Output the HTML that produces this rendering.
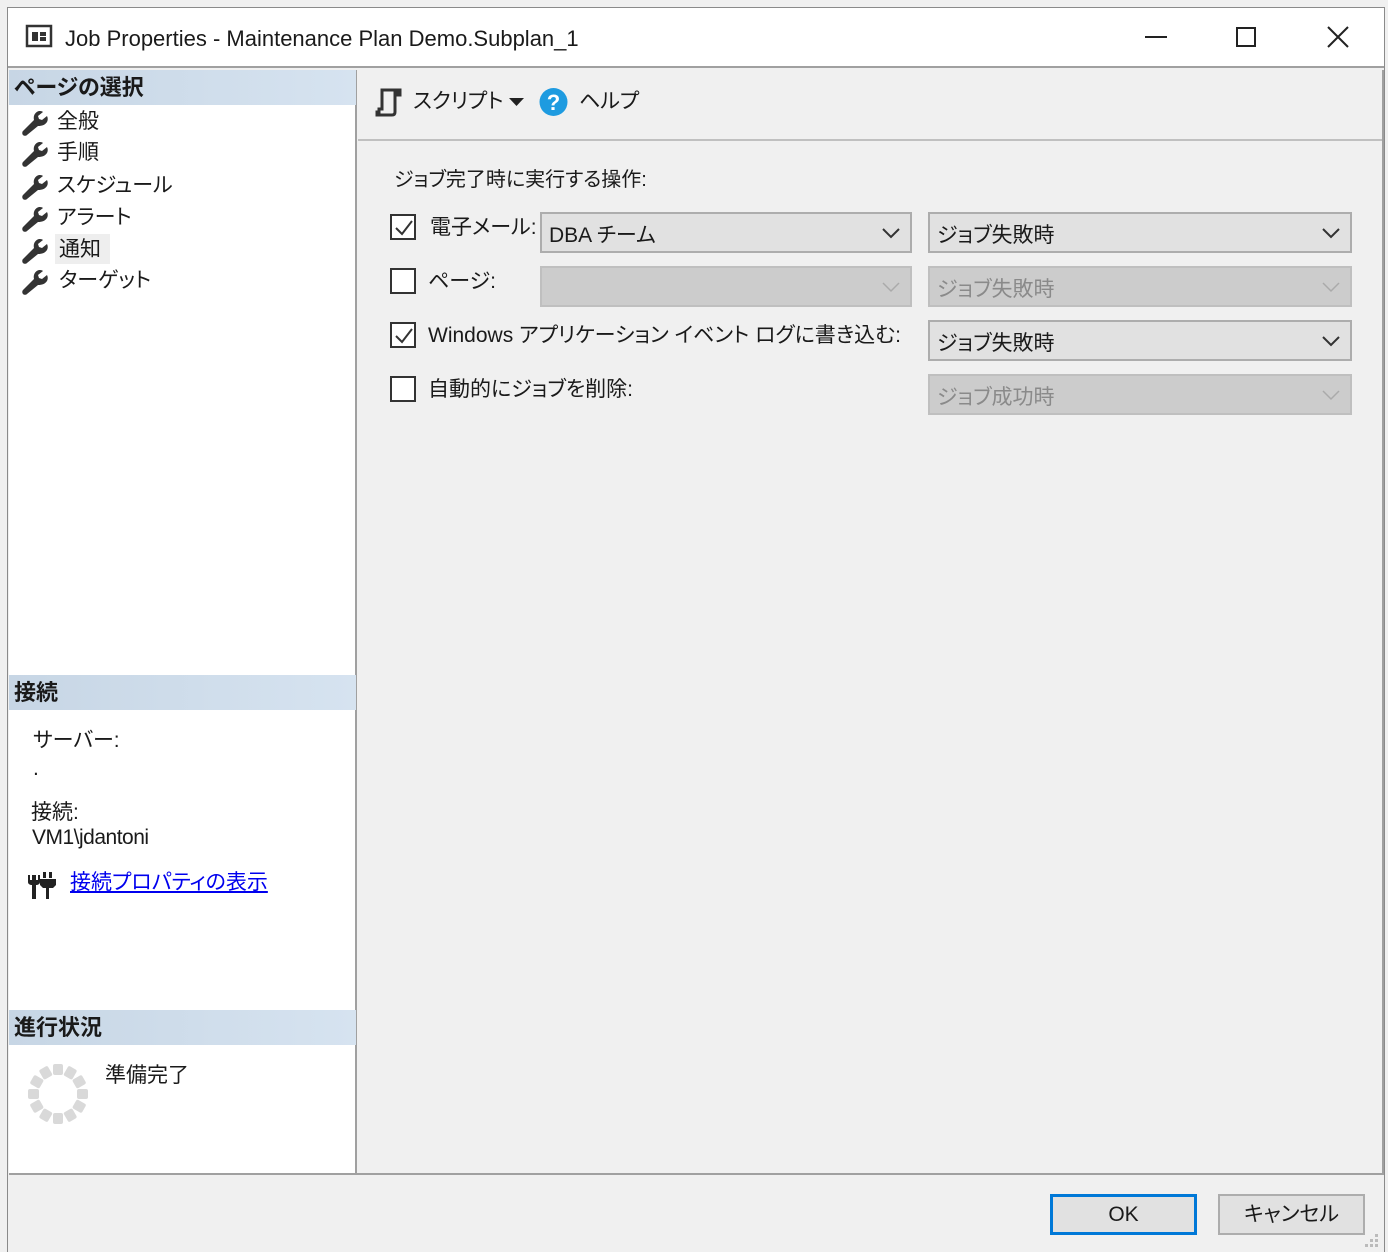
<!DOCTYPE html>
<html><head><meta charset="utf-8"><style>
*{margin:0;padding:0;box-sizing:border-box}
body{width:1388px;height:1252px;background:#f0f0f0;position:relative;overflow:hidden;font-family:"Segoe UI","Liberation Sans","Noto Sans CJK JP",sans-serif;color:#1a1a1a;font-feature-settings:"palt"}
.a{position:absolute}
.t{font-size:21px;white-space:nowrap;line-height:1}
.hdr{position:absolute;left:9px;width:347px;height:35px;background:linear-gradient(90deg,#c7d6e5,#d6e3f0);font-weight:bold;font-size:22px;padding:5px 5px;line-height:25px}
.cb{position:absolute;width:26px;height:26px;border:2px solid #333;background:#fff}
.dd{position:absolute;height:41px;border:2px solid #adadad;background:#e1e1e1;font-size:21px;padding:5px 0 0 7px;white-space:nowrap}
.dd.dis{background:#cccccc;border-color:#bfbfbf;color:#8a8a8a}
.chev{position:absolute;right:10px;top:13px}
.btn{position:absolute;top:1194px;height:41px;width:147px;background:#e1e1e1;border:2px solid #adadad;font-size:21px;text-align:center;line-height:37px}
</style></head><body>
<div class="a" style="left:7px;top:7px;width:1378px;height:1245px;border:1px solid #8a8a8a;border-bottom:none;background:#f0f0f0"></div>
<div class="a" style="left:8px;top:8px;width:1376px;height:60px;background:#fff;border-bottom:2px solid #a0a0a0"></div>
<svg class="a" style="left:25px;top:24px" width="30" height="26"><rect x="2" y="2" width="24" height="20" fill="none" stroke="#333" stroke-width="2.5"/><rect x="7" y="8" width="6" height="9" fill="#333"/><rect x="15" y="8" width="6" height="4" fill="#333"/><rect x="15" y="13" width="6" height="4" fill="#333"/></svg>
<div class="a t" style="left:65px;top:28px;font-size:22px">Job Properties - Maintenance Plan Demo.Subplan_1</div>
<div class="a" style="left:1145px;top:36px;width:22px;height:2px;background:#222"></div>
<div class="a" style="left:1236px;top:27px;width:20px;height:20px;border:2px solid #222"></div>
<svg class="a" style="left:1326px;top:25px" width="24" height="24"><path d="M2 2L22 22M22 2L2 22" stroke="#222" stroke-width="2"/></svg>

<div class="a" style="left:9px;top:70px;width:348px;height:1105px;background:#fff;border-right:2px solid #a0a0a0"></div>
<div class="hdr" style="top:70px">ページの選択</div>
<div class="a" style="left:55px;top:234px;width:55px;height:30px;background:#eeeeee"></div>
<svg class="a" style="left:20px;top:108px" width="30" height="190">
<defs><path id="w" d="M3 23l11-11c-1-4 1-8 5-9 1 0 3 0 4 1l-5 4 1 3 3 1 5-4c1 2 1 4 0 6-2 3-5 4-9 4L7 27c-1 1-3 1-4 0s-1-3 0-4z" fill="#333"/></defs>
<use href="#w" y="0"/><use href="#w" y="31"/><use href="#w" y="64"/><use href="#w" y="96"/><use href="#w" y="128"/><use href="#w" y="159"/>
</svg>
<div class="a t" style="left:57px;top:111px">全般</div>
<div class="a t" style="left:57px;top:142px">手順</div>
<div class="a t" style="left:57px;top:175px">スケジュール</div>
<div class="a t" style="left:57px;top:207px">アラート</div>
<div class="a t" style="left:59px;top:239px">通知</div>
<div class="a t" style="left:59px;top:270px">ターゲット</div>

<div class="hdr" style="top:675px">接続</div>
<div class="a t" style="left:33px;top:730px">サーバー:</div>
<div class="a t" style="left:33px;top:758px">.</div>
<div class="a t" style="left:31px;top:802px">接続:</div>
<div class="a t" style="left:32px;top:827px;letter-spacing:-0.5px">VM1\jdantoni</div>
<svg class="a" style="left:27px;top:870px" width="30" height="30"><path d="M1 5v7c0 2 2 3 4 3v14h4V15c2 0 4-1 4-3V5h-2v5H9V5H5v5H3V5z" fill="#222"/><rect x="16" y="2" width="3" height="6" fill="#222"/><rect x="22" y="2" width="3" height="6" fill="#222"/><path d="M13 9h16v6l-3 3h-4v11h-3V18h-3l-3-3z" fill="#222"/></svg>
<div class="a t" style="left:70px;top:872px;color:#0000ee;text-decoration:underline">接続プロパティの表示</div>

<div class="hdr" style="top:1010px">進行状況</div>
<svg class="a" style="left:27px;top:1063px" width="62" height="62"><g fill="#d9d9d9" transform="translate(31 31)">
<g id="s"><rect x="-5" y="-30" width="10" height="11" rx="2"/></g>
<use href="#s" transform="rotate(30)"/><use href="#s" transform="rotate(60)"/><use href="#s" transform="rotate(90)"/><use href="#s" transform="rotate(120)"/><use href="#s" transform="rotate(150)"/><use href="#s" transform="rotate(180)"/><use href="#s" transform="rotate(210)"/><use href="#s" transform="rotate(240)"/><use href="#s" transform="rotate(270)"/><use href="#s" transform="rotate(300)"/><use href="#s" transform="rotate(330)"/></g></svg>
<div class="a t" style="left:105px;top:1065px">準備完了</div>

<div class="a" style="left:358px;top:70px;width:1025px;height:71px;background:#f0f0f0;border-bottom:2px solid #c0c0c0"></div>
<svg class="a" style="left:374px;top:87px" width="30" height="30"><path d="M8 3h18v5h-3v-2h-2v19c0 2-1 3-3 3H3v-3h2v-3h3V5c0-1 0-2 0-2z" fill="none" stroke="#333" stroke-width="3"/></svg>
<div class="a t" style="left:413px;top:91px">スクリプト</div>
<svg class="a" style="left:508px;top:96px" width="18" height="12"><path d="M1 2h15l-7.5 8z" fill="#222"/></svg>
<svg class="a" style="left:539px;top:87px" width="30" height="30"><circle cx="14.5" cy="15" r="14" fill="#1e9be0"/><text x="14.5" y="23" font-size="22" font-weight="bold" fill="#fff" text-anchor="middle" font-family="Liberation Sans,sans-serif">?</text></svg>
<div class="a t" style="left:579px;top:91px">ヘルプ</div>

<div class="a t" style="left:394px;top:170px;font-size:20px">ジョブ完了時に実行する操作:</div>
<div class="cb" style="left:390px;top:214px"></div>
<svg class="a" style="left:393px;top:217px" width="22" height="22"><path d="M3 11l6 6L19 4" fill="none" stroke="#333" stroke-width="2"/></svg>
<div class="a t" style="left:430px;top:217px">電子メール:</div>
<div class="cb" style="left:390px;top:268px"></div>
<div class="a t" style="left:428px;top:271px">ページ:</div>
<div class="cb" style="left:390px;top:322px"></div>
<svg class="a" style="left:393px;top:325px" width="22" height="22"><path d="M3 11l6 6L19 4" fill="none" stroke="#333" stroke-width="2"/></svg>
<div class="a t" style="left:428px;top:325px">Windows アプリケーション イベント ログに書き込む:</div>
<div class="cb" style="left:390px;top:376px"></div>
<div class="a t" style="left:428px;top:379px">自動的にジョブを削除:</div>

<div class="dd" style="left:540px;top:212px;width:372px">DBA チーム<svg class="chev" width="18" height="12"><path d="M1 2l8 8 8-8" fill="none" stroke="#333" stroke-width="2"/></svg></div>
<div class="dd dis" style="left:540px;top:266px;width:372px"><svg class="chev" width="18" height="12"><path d="M1 2l8 8 8-8" fill="none" stroke="#aaa" stroke-width="1.5"/></svg></div>
<div class="dd" style="left:928px;top:212px;width:424px">ジョブ失敗時<svg class="chev" width="18" height="12"><path d="M1 2l8 8 8-8" fill="none" stroke="#333" stroke-width="2"/></svg></div>
<div class="dd dis" style="left:928px;top:266px;width:424px">ジョブ失敗時<svg class="chev" width="18" height="12"><path d="M1 2l8 8 8-8" fill="none" stroke="#aaa" stroke-width="1.5"/></svg></div>
<div class="dd" style="left:928px;top:320px;width:424px">ジョブ失敗時<svg class="chev" width="18" height="12"><path d="M1 2l8 8 8-8" fill="none" stroke="#333" stroke-width="2"/></svg></div>
<div class="dd dis" style="left:928px;top:374px;width:424px">ジョブ成功時<svg class="chev" width="18" height="12"><path d="M1 2l8 8 8-8" fill="none" stroke="#aaa" stroke-width="1.5"/></svg></div>

<div class="a" style="left:1382px;top:70px;width:2px;height:1105px;background:#a0a0a0"></div>
<div class="a" style="left:9px;top:1173px;width:1375px;height:2px;background:#a0a0a0"></div>

<div class="btn" style="left:1050px;border:3px solid #0078d7;line-height:35px">OK</div>
<div class="btn" style="left:1218px">キャンセル</div>
<svg class="a" style="left:1364px;top:1232px" width="18" height="18" fill="#bbb"><rect x="11" y="2" width="3" height="3"/><rect x="6" y="7" width="3" height="3"/><rect x="11" y="7" width="3" height="3"/><rect x="1" y="12" width="3" height="3"/><rect x="6" y="12" width="3" height="3"/><rect x="11" y="12" width="3" height="3"/></svg>
</body></html>
